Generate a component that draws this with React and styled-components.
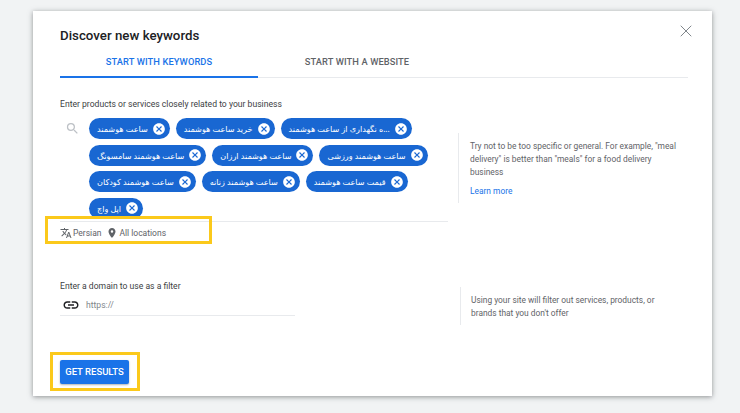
import React from 'react';
import styled, { createGlobalStyle } from 'styled-components';
import { MdCancel, MdLink, MdPlace, MdSearch, MdTranslate } from 'react-icons/md';
import { X } from 'lucide-react';

const keywords = [
  'ساعت هوشمند',
  'خرید ساعت هوشمند',
  '...ه نگهداری از ساعت هوشمند',
  'ساعت هوشمند سامسونگ',
  'ساعت هوشمند ارزان',
  'ساعت هوشمند ورزشی',
  'ساعت هوشمند کودکان',
  'ساعت هوشمند زنانه',
  'قیمت ساعت هوشمند',
  'اپل واچ',
];

const App = () => {
  return (
    <>
      <GlobalStyle />
      <Dialog>
        <CloseButton>
          <X size={20} strokeWidth={1.2} />
        </CloseButton>
        <Title>Discover new keywords</Title>
        <Tabs>
          <Tab $active>START WITH KEYWORDS</Tab>
          <Tab>START WITH A WEBSITE</Tab>
        </Tabs>

        <KeywordSection>
          <MainColumn>
            <Label>Enter products or services closely related to your business</Label>
            <KeywordInput>
              <SearchIcon>
                <MdSearch size={15} />
              </SearchIcon>
              <ChipList>
                {keywords.map(word => (
                  <Chip key={word}>
                    <ChipText>{word}</ChipText>
                    <MdCancel size={14} />
                  </Chip>
                ))}
              </ChipList>
            </KeywordInput>
            <TargetRow>
              <TargetItem>
                <MdTranslate size={12} />
                Persian
              </TargetItem>
              <TargetItem>
                <MdPlace size={12} />
                All locations
              </TargetItem>
              <Highlight $top={-11} $left={-15} $width={167} $height={28} />
            </TargetRow>
          </MainColumn>
          <Note>
            <NoteText>
              Try not to be too specific or general. For example, "meal delivery" is better than
              "meals" for a food delivery business
            </NoteText>
            <LearnMore href="#">Learn more</LearnMore>
          </Note>
        </KeywordSection>

        <FilterSection>
          <FilterColumn>
            <Label>Enter a domain to use as a filter</Label>
            <DomainInput>
              <LinkIcon>
                <MdLink size={18} />
              </LinkIcon>
              <Placeholder>https://</Placeholder>
            </DomainInput>
          </FilterColumn>
          <FilterNote>
            <NoteText>Using your site will filter out services, products, or brands that you don't offer</NoteText>
          </FilterNote>
        </FilterSection>

        <Footer>
          <SubmitButton>GET RESULTS</SubmitButton>
          <Highlight $top={-8} $left={-10} $width={90} $height={39} />
        </Footer>
      </Dialog>
    </>
  );
};

export default App;

const GlobalStyle = createGlobalStyle`
  html, body {
    margin: 0;
    height: 413px;
    overflow: hidden;
    background: #f1f3f4;
    font-family: Roboto, "Liberation Sans", sans-serif;
  }
`;

const Dialog = styled.div`
  position: relative;
  box-sizing: border-box;
  width: 679px;
  height: 385px;
  margin: 11px 0 0 33px;
  padding: 16px 24px 0 27px;
  background: #fff;
  box-shadow: 0 1px 5px rgba(60, 64, 67, 0.55);
`;

const CloseButton = styled.div`
  position: absolute;
  top: 10px;
  right: 16px;
  display: flex;
  color: #80868b;
`;

const Title = styled.h2`
  margin: 0;
  height: 18px;
  font-size: 13.3px;
  line-height: 18px;
  font-weight: 500;
  color: #202124;
`;

const Tabs = styled.div`
  display: flex;
  height: 31px;
  margin-top: 1px;
  border-bottom: 1px solid #e8eaed;
`;

const Tab = styled.div`
  box-sizing: border-box;
  width: 198px;
  height: 32px;
  padding-top: 9px;
  text-align: center;
  font-size: 9.3px;
  line-height: 14px;
  font-weight: 500;
  letter-spacing: 0.1px;
  color: ${props => (props.$active ? '#1a73e8' : '#5f6368')};
  border-bottom: ${props => (props.$active ? '2px solid #1a73e8' : 'none')};
`;

const KeywordSection = styled.div`
  display: flex;
  margin-top: 20px;
`;

const MainColumn = styled.div`
  width: 388px;
`;

const Label = styled.div`
  height: 13px;
  font-size: 8.6px;
  line-height: 13px;
  color: #3c4043;
`;

const KeywordInput = styled.div`
  display: flex;
  margin-top: 7px;
  padding-bottom: 2px;
  border-bottom: 1px solid #e8eaed;
`;

const SearchIcon = styled.div`
  display: flex;
  width: 29px;
  padding: 3px 0 0 5px;
  box-sizing: border-box;
  color: #bdc1c6;
`;

const ChipList = styled.div`
  display: flex;
  flex-wrap: wrap;
  flex: 1;
  gap: 5.5px 6px;
`;

const Chip = styled.div`
  display: flex;
  align-items: center;
  gap: 4px;
  height: 21px;
  padding: 0 4px 0 8px;
  border-radius: 11px;
  background: #1967d2;
  color: #fff;
`;

const ChipText = styled.span`
  direction: rtl;
  font-family: "Noto Sans", "DejaVu Sans", sans-serif;
  font-size: 8.1px;
  line-height: 21px;
`;

const TargetRow = styled.div`
  position: relative;
  display: flex;
  gap: 5px;
  margin-top: 5px;
  height: 12px;
`;

const TargetItem = styled.div`
  display: flex;
  align-items: center;
  gap: 1px;
  font-size: 8.5px;
  line-height: 12px;
  color: #5f6368;

  svg {
    color: #5f6368;
  }
`;

const Highlight = styled.div`
  position: absolute;
  top: ${props => props.$top}px;
  left: ${props => props.$left}px;
  width: ${props => props.$width}px;
  height: ${props => props.$height}px;
  box-sizing: border-box;
  border: 3px solid #fbc91b;
  pointer-events: none;
`;

const Note = styled.div`
  box-sizing: border-box;
  width: 221px;
  height: 70px;
  margin: 35px 0 0 10px;
  padding-left: 11px;
  border-left: 1px solid #e8eaed;
`;

const NoteText = styled.div`
  padding-top: 7px;
  font-size: 8.4px;
  line-height: 13.2px;
  color: #5f6368;
`;

const LearnMore = styled.a`
  display: block;
  margin-top: 5px;
  font-size: 8.4px;
  line-height: 13px;
  color: #1a73e8;
  text-decoration: none;
`;

const FilterSection = styled.div`
  display: flex;
  margin-top: 41px;
`;

const FilterColumn = styled.div`
  width: 235px;
`;

const DomainInput = styled.div`
  display: flex;
  align-items: center;
  height: 19px;
  margin-top: 3px;
  border-bottom: 1px solid #e8eaed;
`;

const LinkIcon = styled.div`
  display: flex;
  width: 26px;
  padding-left: 2px;
  box-sizing: border-box;
  color: #202124;
`;

const Placeholder = styled.span`
  font-size: 8.6px;
  color: #80868b;
`;

const FilterNote = styled.div`
  box-sizing: border-box;
  width: 220px;
  height: 38px;
  margin: 7px 0 0 165px;
  padding-left: 10px;
  border-left: 1px solid #e8eaed;
`;

const Footer = styled.div`
  position: relative;
  margin-top: 35px;
`;

const SubmitButton = styled.button`
  display: block;
  width: 69px;
  height: 24px;
  padding: 0;
  border: none;
  border-radius: 2px;
  background: #1a73e8;
  box-shadow: 0 1px 2px rgba(60, 64, 67, 0.4);
  color: #fff;
  font-family: Roboto, "Liberation Sans", sans-serif;
  font-size: 9.5px;
  font-weight: 500;
`;
